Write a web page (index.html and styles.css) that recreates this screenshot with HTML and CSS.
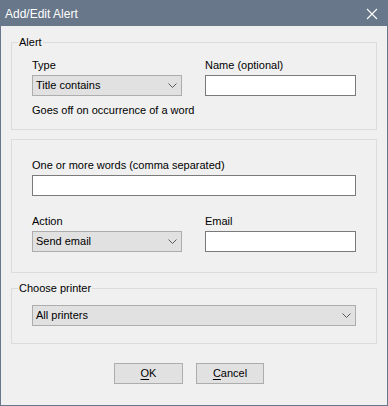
FILE: index.html
```html
<!DOCTYPE html>
<html>
<head>
<meta charset="utf-8">
<link rel="stylesheet" href="styles.css">
</head>
<body>
<div class="window">
  <div class="titlebar">
    <span class="title">Add/Edit Alert</span>
    <svg class="close" width="12" height="12" viewBox="0 0 12 12"><path d="M1 1 L11 11 M11 1 L1 11" stroke="#ffffff" stroke-width="1.1" fill="none"/></svg>
  </div>
  <div class="content">
    <fieldset class="group g1">
      <legend>Alert</legend>
      <div class="row">
        <div class="col">
          <div class="label">Type</div>
          <div class="select w150"><span>Title contains</span><svg class="chev" width="9" height="5" viewBox="0 0 9 5"><path d="M0.5 0.5 L4.5 4.5 L8.5 0.5" stroke="#5a5a5a" fill="none"/></svg></div>
        </div>
        <div class="col">
          <div class="label">Name (optional)</div>
          <div class="input w151"></div>
        </div>
      </div>
      <div class="note">Goes off on occurrence of a word</div>
    </fieldset>
    <fieldset class="group g2">
      <div class="label">One or more words (comma separated)</div>
      <div class="input wfull"></div>
      <div class="row r2">
        <div class="col">
          <div class="label">Action</div>
          <div class="select w150"><span>Send email</span><svg class="chev" width="9" height="5" viewBox="0 0 9 5"><path d="M0.5 0.5 L4.5 4.5 L8.5 0.5" stroke="#5a5a5a" fill="none"/></svg></div>
        </div>
        <div class="col">
          <div class="label">Email</div>
          <div class="input w151"></div>
        </div>
      </div>
    </fieldset>
    <fieldset class="group g3">
      <legend>Choose printer</legend>
      <div class="select wfull"><span>All printers</span><svg class="chev" width="9" height="5" viewBox="0 0 9 5"><path d="M0.5 0.5 L4.5 4.5 L8.5 0.5" stroke="#5a5a5a" fill="none"/></svg></div>
    </fieldset>
    <div class="buttons">
      <div class="btn ok"><u>O</u>K</div>
      <div class="btn cancel"><u>C</u>ancel</div>
    </div>
  </div>
</div>
</body>
</html>
```
FILE: styles.css
```css
* { box-sizing: border-box; }
html, body { margin: 0; padding: 0; background: #f0f0f0; }
body {
  font-family: "Liberation Sans", Arial, sans-serif;
  font-size: 11px;
  color: #000;
}
.window {
  width: 388px;
  height: 406px;
  border: 1px solid #687789;
  background: #f0f0f0;
  display: flex;
  flex-direction: column;
}
.titlebar {
  height: 25px;
  background: #687789;
  color: #ffffff;
  display: flex;
  align-items: center;
  justify-content: space-between;
  padding: 0 9px 0 4px;
  flex-shrink: 0;
}
.title { font-size: 12px; line-height: 16px; }
.close { display: block; }
.content {
  padding: 9px 10px 0 10px;
  display: flex;
  flex-direction: column;
}
.group {
  margin: 0;
  border: 1px solid #dcdcdc;
  padding: 0 0 0 20px;
  min-width: 0;
}
.group legend {
  padding: 0 1px;
  margin-left: -14px;
  line-height: 14px;
  font-size: 11px;
}
.g1 { height: 95px; padding-top: 9px; }
.g2 { height: 134px; margin-top: 9px; padding-top: 18px; }
.g3 { height: 63px; margin-top: 8px; padding-top: 10px; }
.row { display: flex; gap: 23px; }
.col { display: flex; flex-direction: column; }
.label { line-height: 15px; margin-bottom: 2px; }
.select {
  height: 21px;
  background: #e1e1e1;
  border: 1px solid #adadad;
  display: flex;
  align-items: center;
  justify-content: space-between;
  padding: 0 4px 0 3px;
}
.select span { line-height: 15px; }
.chev { display: block; margin-top: -1px; }
.input {
  height: 21px;
  background: #ffffff;
  border: 1px solid #7a7a7a;
}
.w150 { width: 150px; }
.w151 { width: 151px; }
.wfull { width: 324px; }
.note { margin-top: 7px; line-height: 15px; }
.r2 { margin-top: 18px; }
.buttons {
  display: flex;
  gap: 13px;
  margin-top: 19px;
  padding-left: 103px;
}
.btn {
  width: 69px;
  height: 21px;
  background: #e1e1e1;
  border: 1px solid #adadad;
  display: flex;
  align-items: center;
  justify-content: center;
  line-height: 15px;
}
.btn u { text-decoration-thickness: 1px; text-underline-offset: 2px; }
.cancel { width: 68px; }
```
